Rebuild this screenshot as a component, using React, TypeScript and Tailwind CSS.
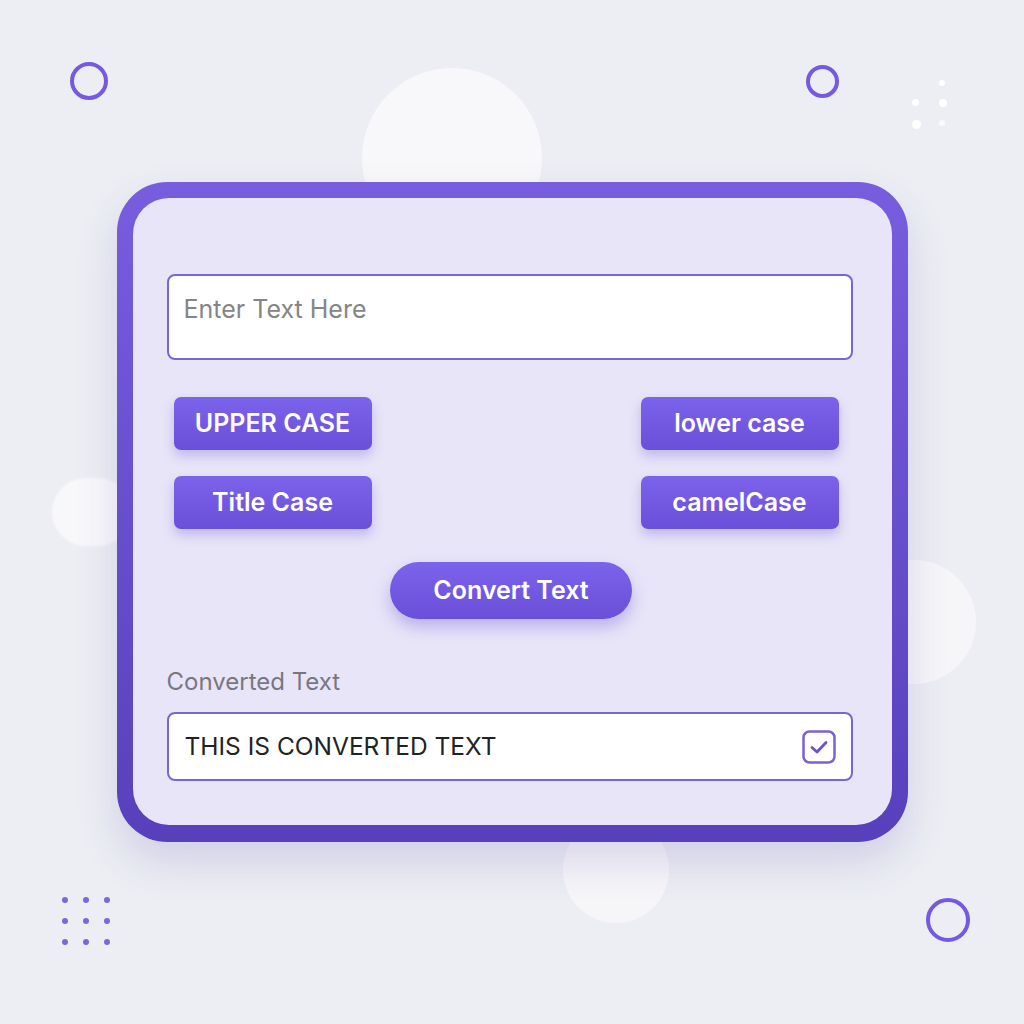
import { useState } from 'react'

const buttons = ['UPPER CASE', 'lower case', 'Title Case', 'camelCase']

function Ring({ className }: { className: string }) {
  return <div className={`absolute rounded-full border-[4px] border-[#7659e0] ${className}`} />
}

export default function App() {
  const [text, setText] = useState('')

  return (
    <div
      className="relative flex h-[1024px] w-[1024px] items-center justify-center overflow-hidden bg-[#eceef3]"
      style={{ fontFamily: 'Inter, "Noto Sans", sans-serif' }}
    >
      {/* background decor */}
      <div className="absolute left-[362px] top-[68px] h-[180px] w-[180px] rounded-full bg-[#f8f8fa]" />
      <div className="absolute left-[52px] top-[478px] h-[68px] w-[80px] rounded-[34px] bg-[#f8f8fa] blur-[1px]" />
      <div className="absolute left-[852px] top-[560px] h-[124px] w-[124px] rounded-full bg-[#f6f6f8]" />
      <div className="absolute left-[563px] top-[817px] h-[106px] w-[106px] rounded-full bg-[#f6f6f8]" />
      <Ring className="left-[70px] top-[62px] h-[38px] w-[38px]" />
      <Ring className="left-[806px] top-[65px] h-[33px] w-[33px]" />
      <Ring className="left-[926px] top-[898px] h-[44px] w-[44px]" />
      <div className="absolute left-[62px] top-[897px] grid grid-cols-3 gap-x-[15px] gap-y-[15px]">
        {Array.from({ length: 9 }).map((_, i) => (
          <span key={i} className="h-[6px] w-[6px] rounded-full bg-[#7c66dc]" />
        ))}
      </div>
      <div className="absolute left-[912px] top-[80px] grid grid-cols-2 gap-x-[18px] gap-y-[13px]">
        <span />
        <span className="h-[6px] w-[6px] rounded-full bg-white" />
        <span className="h-[7px] w-[7px] rounded-full bg-white" />
        <span className="h-[8px] w-[8px] rounded-full bg-white" />
        <span className="h-[9px] w-[9px] rounded-full bg-white" />
        <span className="h-[6px] w-[6px] rounded-full bg-white/70" />
      </div>

      {/* card */}
      <div className="relative rounded-[50px] bg-gradient-to-b from-[#785ddf] to-[#5840bc] p-[16px] pb-[17px] shadow-[0_20px_40px_rgba(90,70,180,0.18)]">
        <div className="h-[627px] w-[759px] rounded-[36px] bg-[#e8e5f8] pl-[34px] pt-[76px]">
          <input
            value={text}
            onChange={(e) => setText(e.target.value)}
            placeholder="Enter Text Here"
            className="h-[86px] w-[686px] rounded-[8px] border-2 border-[#7a65d6] bg-white px-[15px] pb-[16px] text-[25px] text-[#333] outline-none placeholder:text-[#858585]"
          />

          <div className="mt-[37px] grid w-[686px] grid-cols-2 gap-y-[26px] pl-[7px] pr-[14px]">
            {buttons.map((b, i) => (
              <button
                key={b}
                className={`h-[53px] w-[198px] rounded-[7px] bg-gradient-to-b from-[#7c63ec] to-[#6a4fd8] text-[25px] font-semibold text-white shadow-[0_6px_12px_rgba(100,80,210,0.3)] ${i % 2 ? 'justify-self-end' : ''}`}
              >
                {b}
              </button>
            ))}
          </div>

          <div className="mt-[33px] flex w-[686px] justify-center pl-[3px]">
            <button className="h-[57px] w-[242px] rounded-full bg-gradient-to-b from-[#7c63ec] to-[#6a4fd8] text-[25px] font-semibold text-white shadow-[0_8px_16px_rgba(100,80,210,0.35)]">
              Convert Text
            </button>
          </div>

          <p className="mt-[48px] text-[24px] leading-[30px] text-[#7a7680]">Converted Text</p>

          <div className="mt-[15px] flex h-[69px] w-[686px] items-center justify-between rounded-[8px] border-2 border-[#7a65d6] bg-white pl-[16px] pr-[15px]">
            <span className="text-[24.5px] text-[#222]">THIS IS CONVERTED TEXT</span>
            <svg width="34" height="34" viewBox="0 0 34 34" fill="none">
              <rect x="1.5" y="1.5" width="31" height="31" rx="6" stroke="#7a62d6" strokeWidth="2.5" />
              <path d="M10 17.5 L15 22 L24 12.5" stroke="#6c52d0" strokeWidth="2.8" strokeLinecap="round" strokeLinejoin="round" />
            </svg>
          </div>
        </div>
      </div>
    </div>
  )
}
